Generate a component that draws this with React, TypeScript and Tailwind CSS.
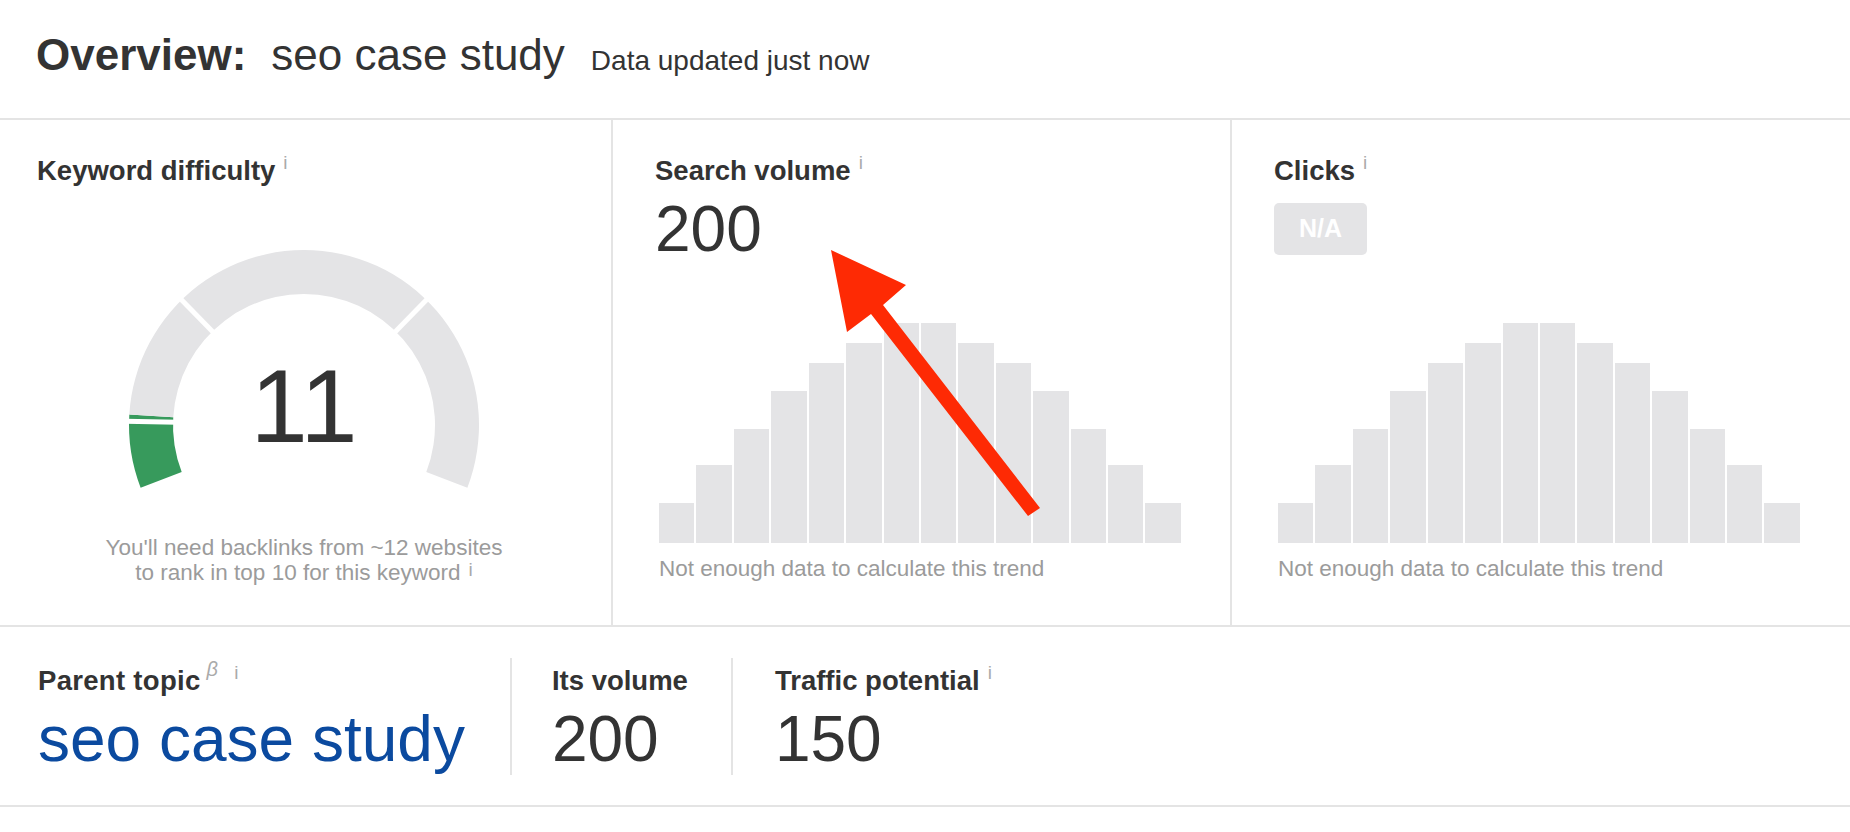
const BARS = [40, 78, 114, 152, 180, 200, 220, 220, 200, 180, 152, 114, 78, 40];

// gauge geometry (svg coords)
const CX = 180;
const CY = 178;
const R_OUT = 175;
const R_IN = 131;
const START = 201;
const SPAN = 222;

const ang = (f: number) => START - SPAN * f;
const pt = (r: number, a: number) => [
  CX + r * Math.cos((a * Math.PI) / 180),
  CY - r * Math.sin((a * Math.PI) / 180),
];

function sector(f0: number, f1: number) {
  const a0 = ang(f0);
  const a1 = ang(f1);
  const large = a0 - a1 > 180 ? 1 : 0;
  const [x1, y1] = pt(R_OUT, a0);
  const [x2, y2] = pt(R_OUT, a1);
  const [x3, y3] = pt(R_IN, a1);
  const [x4, y4] = pt(R_IN, a0);
  return `M${x1} ${y1} A${R_OUT} ${R_OUT} 0 ${large} 1 ${x2} ${y2} L${x3} ${y3} A${R_IN} ${R_IN} 0 ${large} 0 ${x4} ${y4}Z`;
}

function Gauge({ value }: { value: number }) {
  const f = value / 100;
  return (
    <div className="relative mx-auto mt-[62px] h-[246px] w-[360px]">
      <svg width="360" height="246" viewBox="0 0 360 246">
        <path d={sector(0, f)} fill="#379a5c" />
        <path d={sector(f, 1)} fill="#e4e4e6" />
        {[0.1, 0.3, 0.7].map((s) => {
          const [x1, y1] = pt(R_IN - 4, ang(s));
          const [x2, y2] = pt(R_OUT + 4, ang(s));
          return <line key={s} x1={x1} y1={y1} x2={x2} y2={y2} stroke="#fff" strokeWidth="5" />;
        })}
      </svg>
      <div className="absolute inset-x-0 top-[108px] text-center text-[103px] leading-none">{value}</div>
    </div>
  );
}

function Info({ low }: { low?: boolean }) {
  return (
    <span
      className={
        low
          ? "ml-[8px] align-[4px] text-[19px] font-normal leading-[0] text-[#aaa]"
          : "ml-[8px] align-[11px] text-[19px] font-normal leading-[0] text-[#aaa]"
      }
    >
      i
    </span>
  );
}

function TrendBars() {
  return (
    <div className="ml-[4px] flex h-[220px] w-[522px] items-end gap-[2px]">
      {BARS.map((h, i) => (
        <div key={i} className="flex-1 bg-[#e4e4e6]" style={{ height: h }} />
      ))}
    </div>
  );
}

function NoTrend() {
  return (
    <p className="ml-[4px] mt-[15px] text-[22.5px] leading-none text-[#9b9b9b]">
      Not enough data to calculate this trend
    </p>
  );
}

export default function App() {
  return (
    <div className="min-h-screen w-full bg-white font-['Liberation_Sans',Arial,sans-serif] text-[#333]">

      {/* HEADER */}
      <header className="flex h-[120px] items-baseline border-b-2 border-[#e4e4e4] pl-[36px] pt-[33px]">
        <h1 className="text-[44px] font-bold leading-none">Overview:</h1>
        <span className="ml-[25px] text-[44px] leading-none">seo case study</span>
        <span className="ml-[26px] text-[28px] leading-none">Data updated just now</span>
      </header>

      {/* METRIC CARDS */}
      <div className="flex h-[507px] border-b-2 border-[#e4e4e4]">

        {/* Keyword difficulty */}
        <section className="flex w-[613px] flex-col border-r-2 border-[#e4e4e4] pl-[37px] pr-[40px] pt-[37px]">
          <h2 className="text-[27.5px] font-bold leading-none">
            Keyword difficulty<Info />
          </h2>
          <Gauge value={11} />
          <p className="mt-[42px] text-center text-[22.5px] leading-[25px] text-[#9b9b9b]">
            You'll need backlinks from ~12 websites
            <br />
            to rank in top 10 for this keyword<Info low />
          </p>
        </section>

        {/* Search volume */}
        <section className="relative flex w-[619px] flex-col border-r-2 border-[#e4e4e4] pl-[42px] pt-[37px]">
          <h2 className="text-[27.5px] font-bold leading-none">
            Search volume<Info />
          </h2>
          <div className="mt-[12px] text-[64px] leading-none">200</div>
          <div className="mt-[62px]">
            <TrendBars />
          </div>
          <NoTrend />

          {/* red annotation arrow */}
          <svg className="pointer-events-none absolute inset-0 h-full w-full">
            <polygon
              points="218,130 293,165 270,185 427,388 415,396 258,194 234,212"
              fill="#fe2a04"
            />
          </svg>
        </section>

        {/* Clicks */}
        <section className="flex flex-1 flex-col pl-[42px] pt-[37px]">
          <h2 className="text-[27.5px] font-bold leading-none">
            Clicks<Info />
          </h2>
          <div className="mt-[18px] flex h-[52px] w-[93px] items-center justify-center rounded-[5px] bg-[#e4e4e6] text-[25px] font-bold text-white">
            N/A
          </div>
          <div className="mt-[68px]">
            <TrendBars />
          </div>
          <NoTrend />
        </section>
      </div>

      {/* PARENT TOPIC ROW */}
      <div className="flex h-[180px] border-b-2 border-[#e4e4e4] pl-[38px] pt-[31px]">
        <div className="h-[117px] pr-[45px] pt-[9px]">
          <div className="text-[27.5px] font-bold leading-none tracking-[0.3px]">
            Parent topic
            <span className="ml-[6px] align-[14px] text-[20px] font-normal italic leading-[0] text-[#aaa]">β</span>
            <span className="ml-[16px] align-[11px] text-[19px] font-normal leading-[0] text-[#aaa]">i</span>
          </div>
          <div className="mt-[12px] text-[64px] leading-none text-[#0b4a9f]">seo case study</div>
        </div>

        <div className="h-[117px] border-l-2 border-[#e4e4e4] pl-[40px] pr-[43px] pt-[9px]">
          <div className="text-[27.5px] font-bold leading-none">Its volume</div>
          <div className="mt-[12px] text-[64px] leading-none">200</div>
        </div>

        <div className="h-[117px] border-l-2 border-[#e4e4e4] pl-[42px] pt-[9px]">
          <div className="text-[27.5px] font-bold leading-none">
            Traffic potential<Info />
          </div>
          <div className="mt-[12px] text-[64px] leading-none">150</div>
        </div>
      </div>

    </div>
  );
}
